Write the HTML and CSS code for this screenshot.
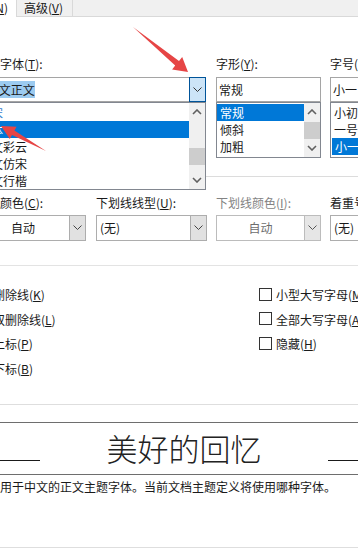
FILE: index.html
```html
<!DOCTYPE html>
<html lang="zh">
<head>
    <meta charset="utf-8">
    <title>字体</title>
    <link rel="stylesheet" href="styles.css">
</head>
<body>
    <div class="tabs">
        <div class="tab active">字体(<u>N</u>)</div>
        <div class="tab">高级(<u>V</u>)</div>
    </div>

    <div class="dialog">
        <div class="row-font">
            <div class="col-font">
                <div class="label">中文字体(<u>T</u>):</div>
                <div class="combo hot">
                    <div class="field"><span class="hilite">+中文正文</span></div>
                    <div class="btn"><svg width="9" height="6" viewBox="0 0 9 6"><polyline points="0.5,0.5 4.5,4.5 8.5,0.5" fill="none" stroke="#333" stroke-width="1"/></svg></div>
                </div>
                <div class="list list-font">
                    <div class="items">
                        <div class="item blue">仿宋</div>
                        <div class="item sel">黑体</div>
                        <div class="item">华文彩云</div>
                        <div class="item">华文仿宋</div>
                        <div class="item">华文行楷</div>
                    </div>
                    <div class="scroll">
                        <div class="arrow"><svg width="10" height="6" viewBox="0 0 10 6"><polyline points="1,5 5,1 9,5" fill="none" stroke="#606060" stroke-width="1.6"/></svg></div>
                        <div class="thumb thumb-font"></div>
                        <div class="fill"></div>
                        <div class="arrow"><svg width="10" height="6" viewBox="0 0 10 6"><polyline points="1,1 5,5 9,1" fill="none" stroke="#606060" stroke-width="1.6"/></svg></div>
                    </div>
                </div>
            </div>

            <div class="group-right">
                <div class="col-style">
                    <div class="label">字形(<u>Y</u>):</div>
                    <div class="edit">常规</div>
                    <div class="list list-short">
                        <div class="items">
                            <div class="item sel">常规</div>
                            <div class="item">倾斜</div>
                            <div class="item">加粗</div>
                        </div>
                        <div class="scroll">
                            <div class="arrow"><svg width="10" height="6" viewBox="0 0 10 6"><polyline points="1,5 5,1 9,5" fill="none" stroke="#606060" stroke-width="1.6"/></svg></div>
                            <div class="thumb thumb-style"></div>
                            <div class="fill"></div>
                            <div class="arrow"><svg width="10" height="6" viewBox="0 0 10 6"><polyline points="1,1 5,5 9,1" fill="none" stroke="#606060" stroke-width="1.6"/></svg></div>
                        </div>
                    </div>
                </div>
                <div class="col-size">
                    <div class="label">字号(<u>S</u>):</div>
                    <div class="edit">小一</div>
                    <div class="list list-short">
                        <div class="items">
                            <div class="item">小初</div>
                            <div class="item">一号</div>
                            <div class="item sel">小一</div>
                        </div>
                    </div>
                </div>
            </div>
        </div>

        <div class="row-color">
            <div class="col-a">
                <div class="label">字体颜色(<u>C</u>):</div>
                <div class="combo tall">
                    <div class="field center">自动</div>
                    <div class="btn"><svg width="9" height="6" viewBox="0 0 9 6"><polyline points="0.5,0.5 4.5,4.5 8.5,0.5" fill="none" stroke="#444" stroke-width="1"/></svg></div>
                </div>
            </div>
            <div class="col-b">
                <div class="label">下划线线型(<u>U</u>):</div>
                <div class="combo tall">
                    <div class="field">(无)</div>
                    <div class="btn"><svg width="9" height="6" viewBox="0 0 9 6"><polyline points="0.5,0.5 4.5,4.5 8.5,0.5" fill="none" stroke="#444" stroke-width="1"/></svg></div>
                </div>
            </div>
            <div class="col-c">
                <div class="label off">下划线颜色(<u>I</u>):</div>
                <div class="combo tall off">
                    <div class="field center">自动</div>
                    <div class="btn"><svg width="9" height="6" viewBox="0 0 9 6"><polyline points="0.5,0.5 4.5,4.5 8.5,0.5" fill="none" stroke="#555" stroke-width="1"/></svg></div>
                </div>
            </div>
            <div class="col-d">
                <div class="label">着重号(·):</div>
                <div class="combo tall">
                    <div class="field">(无)</div>
                </div>
            </div>
        </div>

        <div class="sep sep-color"></div>

        <div class="effects">
            <div class="fx-left">
                <label class="fx"><span class="box"></span>删除线(<u>K</u>)</label>
                <label class="fx"><span class="box"></span>双删除线(<u>L</u>)</label>
                <label class="fx"><span class="box"></span>上标(<u>P</u>)</label>
                <label class="fx"><span class="box"></span>下标(<u>B</u>)</label>
            </div>
            <div class="fx-right">
                <label class="fx"><span class="box"></span>小型大写字母(<u>M</u>)</label>
                <label class="fx"><span class="box"></span>全部大写字母(<u>A</u>)</label>
                <label class="fx"><span class="box"></span>隐藏(<u>H</u>)</label>
            </div>
        </div>

        <div class="sep sep-preview"></div>

        <div class="preview">
            <div class="pv-line"></div>
            <div class="pv-text">美好的回忆</div>
            <div class="pv-line"></div>
        </div>

        <div class="desc">这是用于中文的正文主题字体。当前文档主题定义将使用哪种字体。</div>

        <div class="sep sep-bottom"></div>
    </div>

    <svg class="marks" width="358" height="550" viewBox="0 0 358 550">
        <polygon points="133,27 179,60.9 182.2,57 188,72 172.1,69.4 175.2,65.5" fill="#e64545"/>
        <polygon points="46,151 14.4,130.6 16.6,126.7 1,126 9.8,138.9 12,135" fill="#e64545"/>
    </svg>
</body>
</html>
```

FILE: styles.css
```css
* {
    box-sizing: border-box;
}

html, body {
    margin: 0;
    overflow: hidden;
}

body {
    position: relative;
    width: 358px;
    height: 550px;
    background-color: #fff;
    font-family: "Noto Sans CJK SC", "Microsoft YaHei", sans-serif;
    font-size: 12px;
    line-height: 16px;
    color: #1a1a1a;
}

u {
    text-decoration: underline;
    text-underline-offset: 1px;
}

/* tab strip */
.tabs {
    display: flex;
    height: 17px;
    background-color: #f0f0f0;
    border-bottom: 1px solid #d9d9d9;
}

.tab {
    height: 16px;
    padding: 0 9px 0 7px;
    border-right: 1px solid #d9d9d9;
    white-space: nowrap;
}

.tab.active {
    width: 57px;
    height: 17px;
    margin-left: -40px;
    padding: 0 8px 0 0;
    text-align: right;
    background-color: #fff;
}

/* dialog body, starts a bit left of the visible area */
.dialog {
    width: 420px;
    margin-left: -24px;
    padding-top: 39px;
}

.label {
    height: 16px;
    margin-bottom: 5px;
    white-space: nowrap;
}

.label.off {
    color: #838383;
}

.row-font {
    display: flex;
    align-items: flex-start;
}

.col-font {
    width: 230px;
}

.group-right {
    flex: 1;
    display: flex;
    align-items: flex-start;
    height: 121px;
    padding-left: 10px;
    border-bottom: 1px solid #dcdcdc;
}

.col-style {
    width: 105px;
}

.col-size {
    flex: 1;
    margin-left: 9px;
}

/* combo boxes */
.combo {
    display: flex;
    height: 25px;
}

.combo.tall {
    height: 26px;
}

.combo .field {
    flex: 1;
    padding: 0 3px;
    border: 1px solid #adadad;
    border-right: 0;
    line-height: 23px;
    white-space: nowrap;
    overflow: hidden;
}

.combo.tall .field {
    line-height: 24px;
}

.combo .field:last-child {
    border-right: 1px solid #adadad;
}

.combo .field.center {
    text-align: center;
}

.combo .btn {
    display: flex;
    align-items: center;
    justify-content: center;
    width: 17px;
    border: 1px solid #adadad;
    background-color: #e1e1e1;
}

.combo.hot .field {
    border-color: #a5a5a5;
}

.combo.hot .btn {
    background-color: #cce4f7;
    border-color: #005499;
}

.combo.off .field {
    color: #6d6d6d;
    border-color: #bcbcbc;
}

.combo.off .btn {
    border-color: #bcbcbc;
    background-color: #e6e6e6;
}

.hilite {
    background-color: #9ccbf0;
}

.edit {
    height: 25px;
    padding: 0 2px;
    border: 1px solid #a5a5a5;
    line-height: 23px;
    white-space: nowrap;
    overflow: hidden;
}

/* list boxes */
.list {
    display: flex;
    border: 1px solid #828790;
}

.list-font {
    height: 88px;
}

.list-short {
    height: 56px;
}

.list .items {
    flex: 1;
    padding-top: 1px;
    overflow: hidden;
}

.item {
    height: 17px;
    padding-left: 2px;
    line-height: 17px;
    white-space: nowrap;
}

.col-style .item,
.col-size .item {
    padding-left: 3px;
}

.col-size .item.sel {
    margin-left: 1px;
}

.item.blue {
    color: #3a7fd0;
}

.item.sel {
    background-color: #0078d7;
    color: #fff;
}

.scroll {
    display: flex;
    flex-direction: column;
    width: 16px;
    background-color: #f0f0f0;
}

.scroll .arrow {
    display: flex;
    align-items: center;
    justify-content: center;
    height: 18px;
}

.scroll .fill {
    flex: 1;
}

.thumb {
    height: 17px;
    background-color: #cdcdcd;
}

.thumb-font {
    margin-top: 27px;
}

.thumb-style {
    margin-top: 1px;
}

/* color / underline row */
.row-color {
    display: flex;
    margin-top: 5px;
}

.row-color .label {
    margin-bottom: 4px;
}

.col-a {
    width: 110px;
}

.col-b {
    width: 111px;
    margin-left: 10px;
}

.col-c {
    width: 105px;
    margin-left: 9px;
}

.col-d {
    flex: 1;
    margin-left: 9px;
}

.sep {
    height: 1px;
    background-color: #e3e3e3;
}

.sep-color {
    margin-top: 24px;
}

/* effects */
.effects {
    display: flex;
    margin-top: 17px;
}

.fx-left {
    width: 283px;
}

.fx-right {
    flex: 1;
}

.fx {
    display: flex;
    align-items: center;
    height: 24.5px;
    white-space: nowrap;
}

.fx .box {
    width: 13px;
    height: 13px;
    margin: -2px 4px 0 0;
    border: 1px solid #333;
    background-color: #fff;
}

.sep-preview {
    margin-top: 23px;
    background-color: #dedede;
}

/* preview */
.preview {
    display: grid;
    grid-template-columns: 64px 1fr 62px;
    align-items: start;
    width: 414px;
    height: 53px;
    margin-top: 17px;
    border-top: 1px solid #6e6e6e;
    border-bottom: 1px solid #6e6e6e;
}

.pv-line {
    height: 1px;
    margin-top: 37px;
    background-color: #1a1a1a;
}

.pv-text {
    text-align: center;
    font-family: "Noto Sans CJK SC Light", "Noto Sans CJK SC", sans-serif;
    font-size: 31px;
    font-weight: 200;
    line-height: 50px;
    color: #222;
}

.desc {
    margin-top: 4px;
    white-space: nowrap;
}

.sep-bottom {
    margin-top: 52px;
    background-color: #dedede;
}

/* annotation arrows drawn over the dialog */
.marks {
    position: absolute;
    top: 0;
    left: 0;
    pointer-events: none;
}
```
